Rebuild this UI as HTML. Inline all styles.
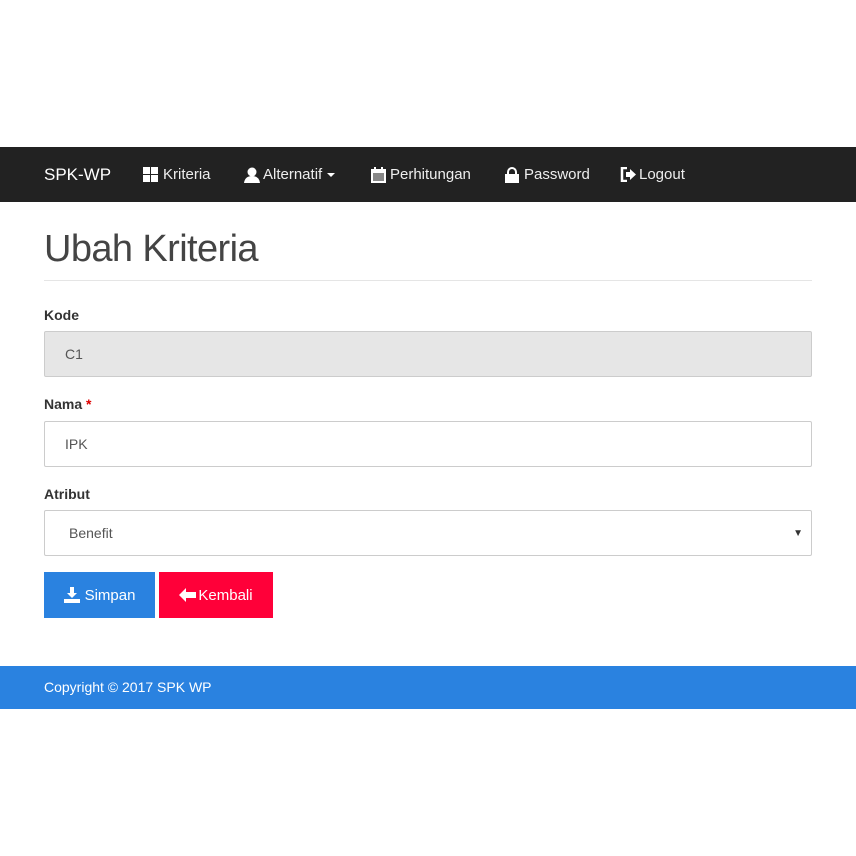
<!DOCTYPE html>
<html><head><meta charset="utf-8"><style>
*{box-sizing:border-box;margin:0;padding:0}
body{width:856px;height:856px;background:#fff;font-family:"Liberation Sans",sans-serif;color:#333;position:relative;overflow:hidden}
.nav{position:absolute;top:147px;left:0;width:856px;height:55px;background:#222;color:#fff}
.nav span{position:absolute;top:19px;font-size:15px;color:#eee;display:flex;align-items:center}
.brand{left:44px;font-size:17px!important;top:18px!important;color:#fff!important}
h1{position:absolute;left:44px;top:228px;font-size:38px;font-weight:300;color:#444;letter-spacing:-0.6px}
.hr{position:absolute;left:44px;top:280px;width:768px;height:1px;background:#e5e5e5}
label{position:absolute;left:44px;font-weight:bold;font-size:14px;color:#333}
.in{position:absolute;left:44px;width:768px;height:46px;border:1px solid #ccc;border-radius:2px;font-size:14px;padding:14px 20px;color:#555}
.btn{position:absolute;top:572px;height:46px;color:#fff;font-size:15px;display:flex;align-items:center;justify-content:center}
.foot{position:absolute;top:666px;left:0;width:856px;height:43px;background:#2a82e0;color:#fff;font-size:14px;padding:13px 44px}
</style></head><body>
<div class="nav">
<span class="brand">SPK-WP</span>
<span style="left:143px"><svg width="16" height="15" style="margin-right:4px"><rect x="0" y="0" width="7" height="7" fill="#fff"/><rect x="8" y="0" width="7" height="7" fill="#fff"/><rect x="0" y="8" width="7" height="7" fill="#fff"/><rect x="8" y="8" width="7" height="7" fill="#fff"/></svg>Kriteria</span>
<span style="left:244px"><svg width="16" height="16" style="margin-right:3px"><circle cx="8" cy="5" r="4.5" fill="#fff"/><path d="M0 16 Q1 9 8 9 Q15 9 16 16Z" fill="#fff"/></svg>Alternatif <svg width="10" height="8" style="margin-left:4px"><path d="M1 2 L9 2 L5 6Z" fill="#fff"/></svg></span>
<span style="left:371px"><svg width="15" height="16" style="margin-right:4px"><rect x="0" y="2" width="15" height="14" fill="#fff"/><rect x="2" y="6" width="11" height="8" fill="#888"/><rect x="3" y="0" width="2" height="4" fill="#fff"/><rect x="10" y="0" width="2" height="4" fill="#fff"/></svg>Perhitungan</span>
<span style="left:504px"><svg width="16" height="16" style="margin-right:4px"><path d="M4 7 V5 A4 4 0 0 1 12 5 V7" stroke="#fff" stroke-width="2" fill="none"/><rect x="1" y="7" width="14" height="9" fill="#fff"/></svg>Password</span>
<span style="left:620px"><svg width="17" height="15" style="margin-right:2px"><path d="M7 1 H2 V14 H7" stroke="#fff" stroke-width="2.5" fill="none"/><path d="M6 5 H10 V2 L16 7.5 L10 13 V10 H6Z" fill="#fff"/></svg>Logout</span>
</div>
<h1>Ubah Kriteria</h1>
<div class="hr"></div>
<label style="top:307px">Kode</label>
<div class="in" style="top:331px;background:#e6e6e6">C1</div>
<label style="top:396px">Nama <span style="color:#d00">*</span></label>
<div class="in" style="top:421px">IPK</div>
<label style="top:486px">Atribut</label>
<div class="in" style="top:510px;padding-left:24px">Benefit<span style="position:absolute;right:8px;top:17px;font-size:10px;color:#333">▼</span></div>
<div class="btn" style="left:44px;width:111px;background:#2a82e0"><svg width="16" height="16" style="margin-right:5px"><path d="M6 0 H10 V6 H13 L8 11 L3 6 H6Z" fill="#fff"/><rect x="0" y="12" width="16" height="4" fill="#fff"/></svg>Simpan</div>
<div class="btn" style="left:159px;width:114px;background:#ff0039"><svg width="17" height="14" style="margin-right:2px"><path d="M0 7 L7 0 V4 H17 V10 H7 V14Z" fill="#fff"/></svg>Kembali</div>
<div class="foot">Copyright © 2017 SPK WP</div>
</body></html>
